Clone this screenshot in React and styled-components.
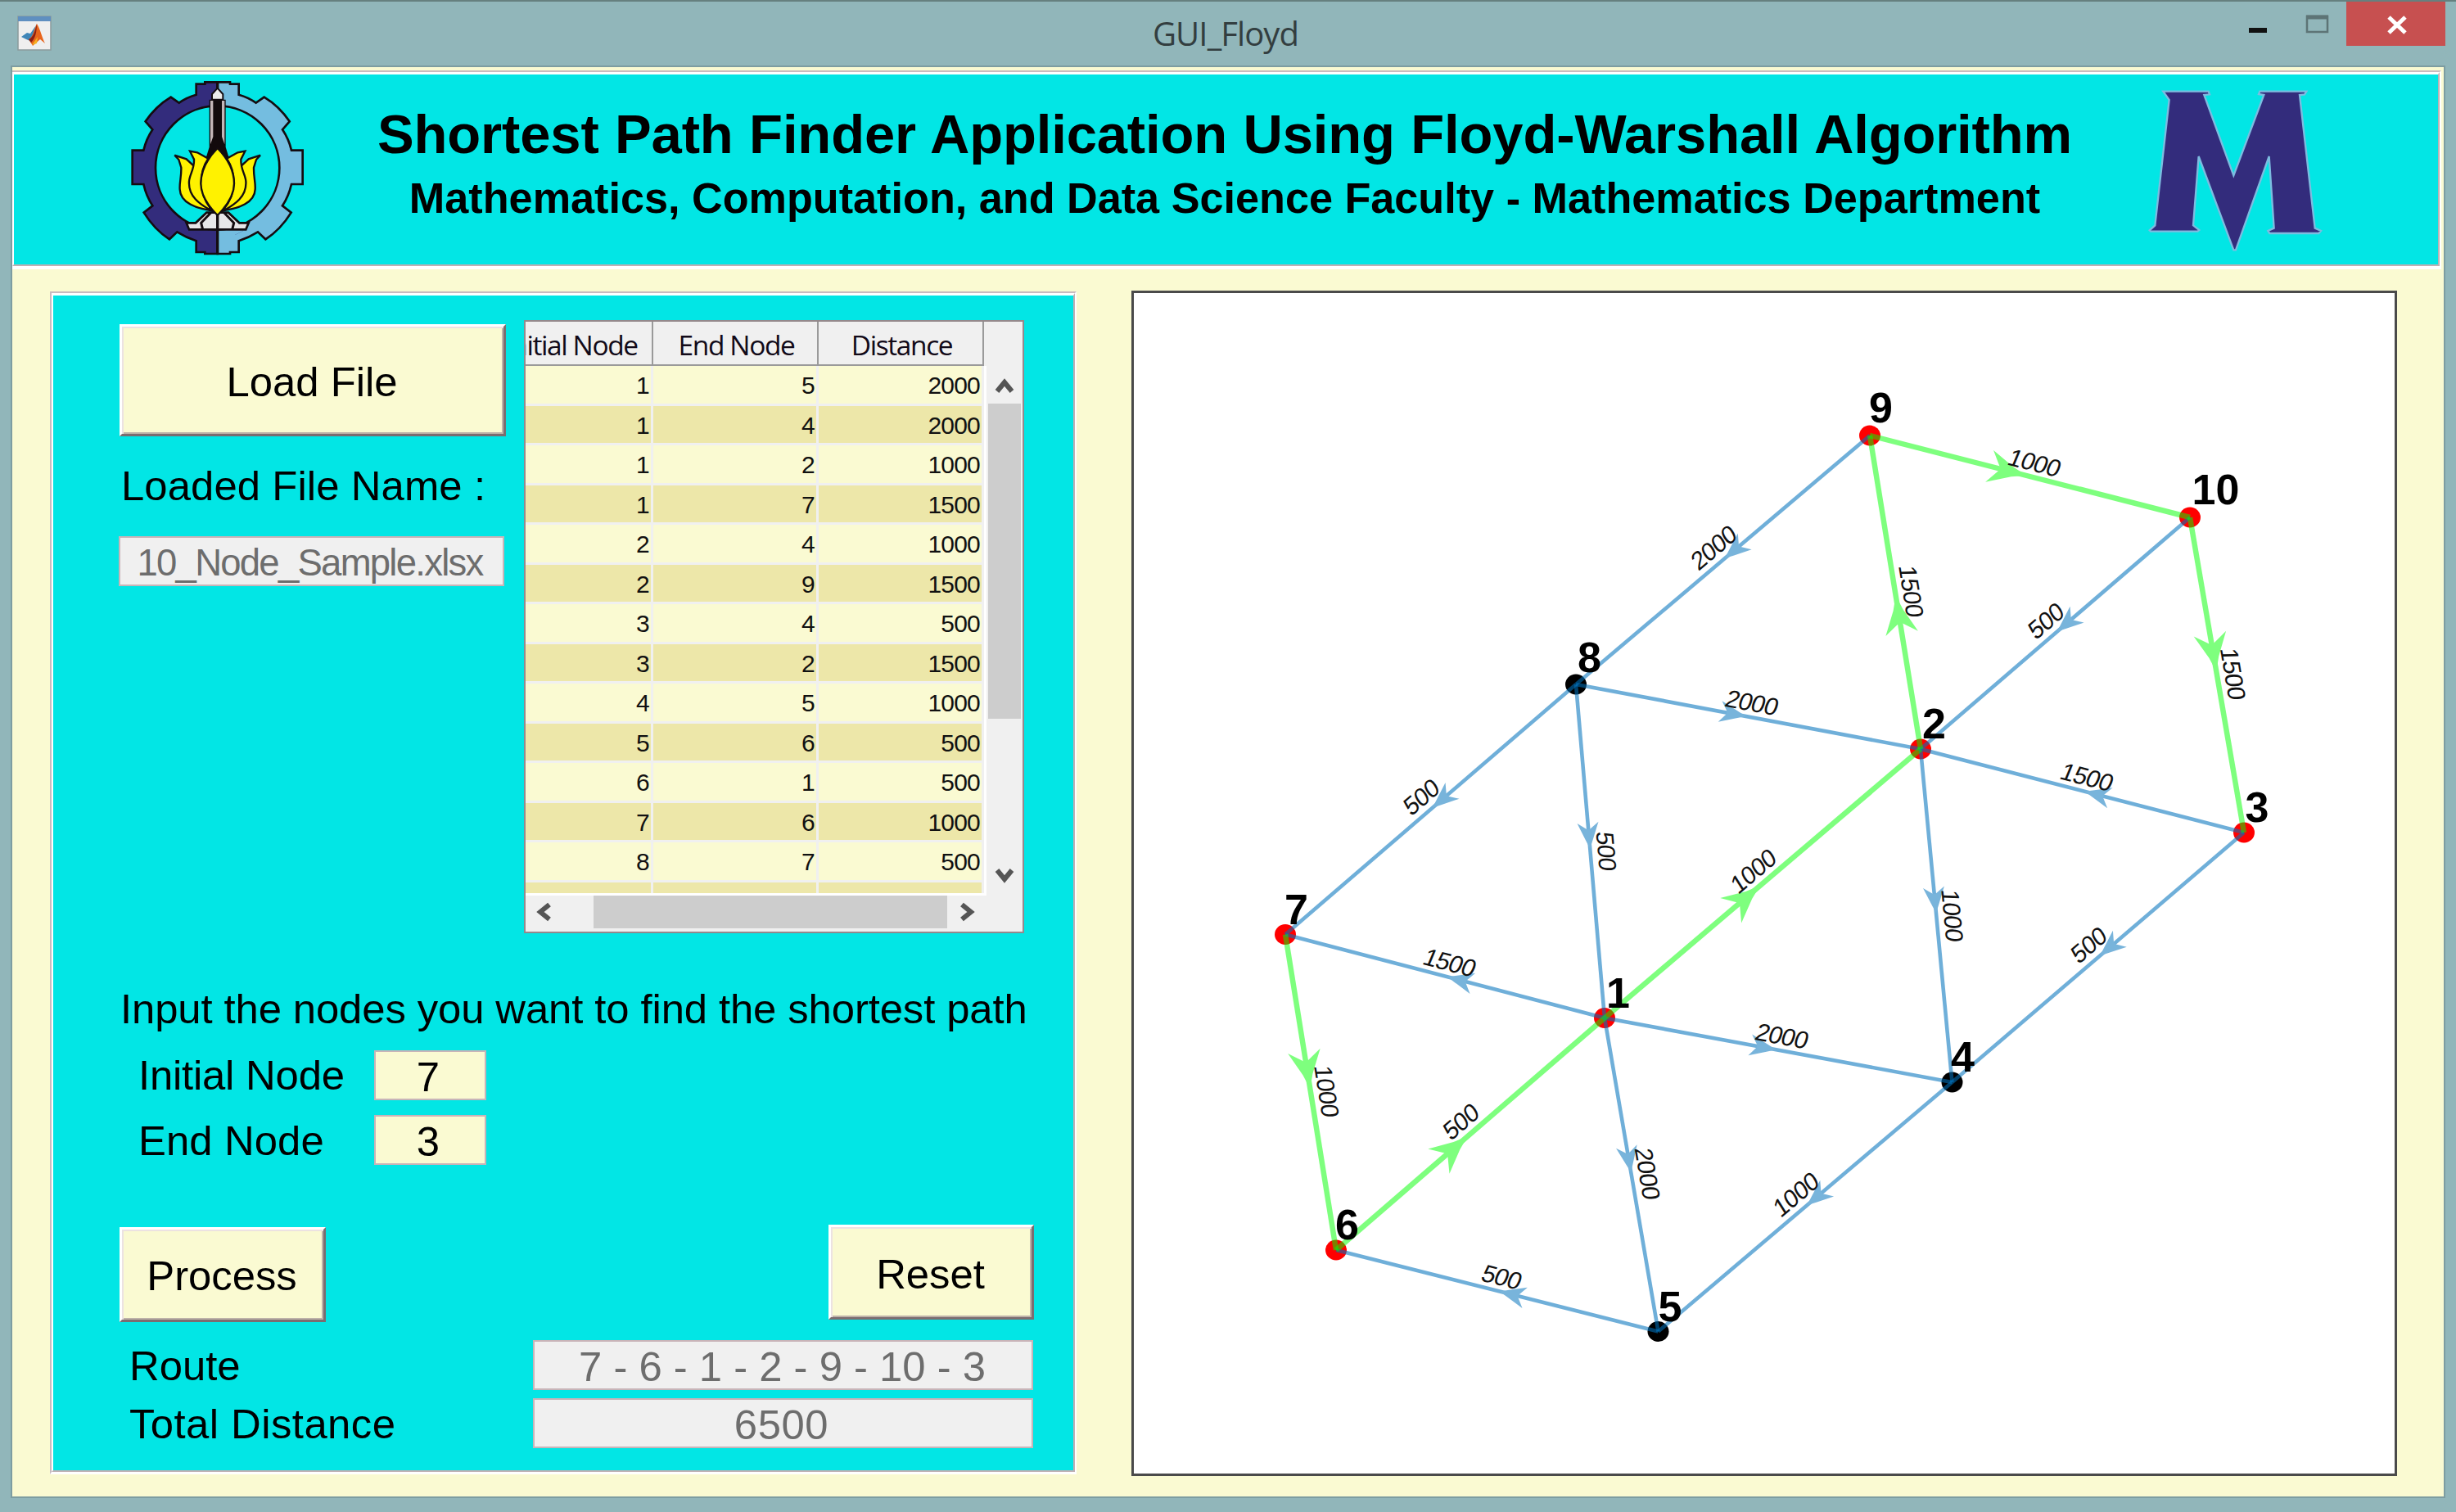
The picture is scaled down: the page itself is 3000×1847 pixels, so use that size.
import React from "react";
import styled, { createGlobalStyle } from "styled-components";

const CYAN = "#02e6e5";
const CREAM = "#fafad2";
const ARIAL = `"Liberation Sans", Arial, sans-serif`;
const SEGOE = `"Open Sans", "Noto Sans", sans-serif`;

const GlobalStyle = createGlobalStyle`
  * { box-sizing: border-box; }
  body { margin: 0; background: #91b6ba; }
`;

const Window = styled.div`
  display: flex;
  flex-direction: column;
  width: 3000px;
  height: 1847px;
  background: #91b6ba;
  border-top: 2px solid #66807f;
  overflow: hidden;
  font-family: ${ARIAL};
  font-size: 50.8px;
  color: #000;
`;

const TitleBar = styled.header`
  display: grid;
  grid-template-columns: 1fr auto 1fr;
  height: 78px;
  padding-right: 13px;
`;

const AppIcon = styled.svg`
  width: 42px;
  height: 43px;
  margin: 17px 0 0 21px;
`;

const Title = styled.h1`
  margin: 10px 0 0 7px;
  font: 400 40px/58px ${SEGOE};
  letter-spacing: ${(p) => p.$track}px;
  color: #333e40;
`;

const Controls = styled.div`
  display: flex;
  justify-content: flex-end;
  align-items: flex-start;
`;

const ControlIcon = styled.svg`
  width: 70px;
  height: 54px;
`;

const Close = styled.div`
  width: 121px;
  height: 54px;
  background: #c75050;
  svg {
    display: block;
    width: 121px;
    height: 54px;
  }
`;

const Client = styled.main`
  width: 2974px;
  height: 1750px;
  margin-left: 13px;
  border: 2px solid #7d9da1;
  background: ${CREAM};
`;

const Etched = styled.div`
  border: solid;
  border-width: 2px;
  border-color: #c9bbbf #fff #fff #c9bbbf;
  > div {
    height: 100%;
    border: solid;
    border-width: 3px 2px 2px 2px;
    border-color: #fff #bfb0b3 #bfb0b3 #fff;
    background: ${CYAN};
  }
`;

const Banner = styled(Etched)`
  width: 2967px;
  height: 243px;
  margin-top: 4px;
  border-left-width: 0;
  border-bottom-width: 4px;
  > div {
    display: flex;
    align-items: flex-start;
  }
`;

const Crest = styled.svg`
  width: 220px;
  height: 224px;
  margin: 2px 0 0 140px;
  flex: none;
`;

const Monogram = styled.svg`
  width: 220px;
  height: 206px;
  margin: 15px 0 0 83px;
  flex: none;
`;

const Headings = styled.div`
  width: 2080px;
  margin-left: 79px;
  padding-top: 33px;
  text-align: center;
  font-weight: 700;
  white-space: nowrap;
`;

const Heading = styled.div`
  font-size: ${(p) => p.$size}px;
  line-height: ${(p) => p.$line}px;
  letter-spacing: ${(p) => p.$track}px;
  word-spacing: ${(p) => p.$word || 0}px;
`;

const Workspace = styled.div`
  display: flex;
  align-items: flex-start;
  gap: 67px;
  padding: 27px 0 0 46px;
`;

const Panel = styled(Etched)`
  width: 1254px;
  height: 1445px;
  border-bottom-width: 3px;
  > div {
    padding: 30px 0 0 81px;
  }
`;

const TopRow = styled.div`
  display: flex;
  align-items: flex-start;
  gap: 22px;
`;

const FileColumn = styled.div`
  width: 472px;
  padding-top: 5px;
`;

const Button = styled.button`
  display: block;
  width: ${(p) => p.$w}px;
  height: ${(p) => p.$h}px;
  margin: ${(p) => p.$top || 0}px 0 0;
  padding: ${(p) => p.$drop || 0}px 2px 0 0;
  border: solid;
  border-width: 3px;
  border-color: #fff #7b6d70 #7b6d70 #fff;
  box-shadow: inset 2px 2px 0 #ece2e2, inset -2px -2px 0 #bdb2a8;
  background: ${CREAM};
  font: 400 50.8px/60px ${ARIAL};
  color: #000;
`;

const Label = styled.div`
  height: 60px;
  line-height: 60px;
  white-space: nowrap;
  width: ${(p) => (p.$w ? `${p.$w}px` : "auto")};
  margin-top: ${(p) => p.$top || 0}px;
  padding-left: ${(p) => p.$left || 0}px;
  letter-spacing: ${(p) => p.$track || 0}px;
`;

const Field = styled.div`
  width: ${(p) => p.$w}px;
  height: 61px;
  margin: ${(p) => p.$margin || "0"};
  padding: ${(p) => p.$pad || "0"};
  border: 2px solid #c8b4b8;
  background: ${(p) => (p.$disabled ? "#f0f0f0" : CREAM)};
  color: ${(p) => (p.$disabled ? "#6d6d6d" : "#000")};
  font-size: ${(p) => p.$size || 50.8}px;
  letter-spacing: ${(p) => p.$track || 0}px;
  line-height: 57px;
  text-align: center;
  white-space: nowrap;
`;

const Row = styled.div`
  display: flex;
  align-items: flex-start;
  margin-top: ${(p) => p.$top}px;
  padding-left: ${(p) => p.$left || 0}px;
`;

const Actions = styled(Row)`
  justify-content: space-between;
  width: 1117px;
`;

const Table = styled.div`
  width: 611px;
  height: 749px;
  border: 2px solid #94898c;
  background: #f0f0f0;
  font-size: 30px;
`;

const TableUpper = styled.div`
  display: flex;
  height: 701px;
`;

const Columns = styled.div`
  display: grid;
  grid-template-columns: 156px 202px 202px;
`;

const Sheet = styled.div`
  width: 563px;
`;

const HeadCell = styled.div`
  display: flex;
  justify-content: center;
  height: 54px;
  margin-left: ${(p) => -(p.$clip || 0)}px;
  border-right: 2px solid #9a9a9a;
  border-bottom: 2px solid #9a9a9a;
  padding-left: 3px;
  font: 400 33.5px/57px ${SEGOE};
  letter-spacing: -1.4px;
  white-space: nowrap;
  color: #120a18;
`;

const HeadRow = styled(Columns)`
  width: 560px;
  overflow: hidden;
`;

const Body = styled.div`
  width: 563px;
  height: 647px;
  overflow: hidden;
  border-right: 3px solid #fff;
  border-bottom: 3px solid #fff;
`;

const Cell = styled.div`
  height: 48.5px;
  padding-right: 2px;
  border-right: 3px solid #f0f0f0;
  border-bottom: 3px solid #f0f0f0;
  background: ${(p) => (p.$dark ? "#ede7a9" : CREAM)};
  line-height: 48.5px;
  letter-spacing: -0.8px;
  text-align: right;
  color: #111;
`;

const VScroll = styled.div`
  display: flex;
  flex-direction: column;
  align-items: center;
  width: 44px;
  padding: 54px 1px 0 0;
`;

const HScroll = styled.div`
  display: flex;
  height: 40px;
`;

const Thumb = styled.div`
  width: ${(p) => p.$w}px;
  height: ${(p) => p.$h}px;
  margin-top: ${(p) => p.$top || 0}px;
  margin-left: ${(p) => p.$left || 0}px;
  background: #cdcdcd;
`;

const Arrow = styled.svg`
  display: block;
  width: ${(p) => p.$w}px;
  height: ${(p) => p.$h}px;
  margin-top: ${(p) => p.$top || 0}px;
  margin-left: ${(p) => p.$left || 0}px;
  fill: none;
  stroke: #555;
  stroke-width: 6;
`;

const Plot = styled.svg`
  display: block;
  width: 1546px;
  height: 1448px;
  margin-top: -1px;
  border: 3px solid #4a4a4a;
  background: #fff;
`;

const NodeName = styled.text`
  font: 700 52px ${ARIAL};
`;

const EdgeWeight = styled.text`
  font: 400 30px ${ARIAL};
  letter-spacing: -0.8px;
  text-anchor: middle;
  fill: #111;
`;

const rows = [
  [1, 5, 2000],
  [1, 4, 2000],
  [1, 2, 1000],
  [1, 7, 1500],
  [2, 4, 1000],
  [2, 9, 1500],
  [3, 4, 500],
  [3, 2, 1500],
  [4, 5, 1000],
  [5, 6, 500],
  [6, 1, 500],
  [7, 6, 1000],
  [8, 7, 500],
  ["", "", ""],
];

const nodes = {
  1: [1960, 1243.5, true],
  2: [2346, 915, true],
  3: [2741, 1017, true],
  4: [2384.5, 1322, false],
  5: [2025.5, 1626.5, false],
  6: [1632, 1527, true],
  7: [1570, 1141.5, true],
  8: [1925, 836, false],
  9: [2284, 532, true],
  10: [2675, 632, true],
};

// Offsets of each node's name from the node centre
const nameOffsets = {
  1: [2, -12.5],
  2: [2, -13],
  3: [1.5, -13],
  4: [-1.5, -13.5],
  5: [0, -13],
  6: [-1, -13.5],
  7: [-1, -13],
  8: [2, -15],
  9: [-1, -16],
  10: [2.5, -16],
};

const edges = [
  [1, 5, 2000],
  [1, 4, 2000],
  [1, 7, 1500],
  [2, 4, 1000],
  [3, 4, 500],
  [3, 2, 1500],
  [4, 5, 1000],
  [5, 6, 500],
  [8, 7, 500],
  [8, 1, 500],
  [8, 2, 2000],
  [9, 8, 2000],
  [10, 2, 500],
  [1, 2, 1000, true],
  [2, 9, 1500, true],
  [6, 1, 500, true],
  [7, 6, 1000, true],
  [9, 10, 1000, true],
  [10, 3, 1500, true],
];

function Edge({ from, to, onRoute }) {
  const [x1, y1] = nodes[from];
  const [x2, y2] = nodes[to];
  const deg = (Math.atan2(y2 - y1, x2 - x1) * 180) / Math.PI;
  const head = onRoute
    ? "M-4 0 L-22 -6 L-51 -20 L-39 -3 L-39 3 L-51 20 L-22 6 Z"
    : "M-3 0 L-14 -4.5 L-35 -13 L-27 -2 L-27 2 L-35 13 L-14 4.5 Z";
  return (
    <g opacity={onRoute ? 0.5 : 0.56}>
      <line x1={x1} y1={y1} x2={x2} y2={y2} stroke={onRoute ? "#00ff00" : "#0072bd"} strokeWidth={onRoute ? 6.5 : 4.6} />
      <path
        d={head}
        fill={onRoute ? "#00ff00" : "#107abf"}
        transform={`translate(${(x1 + x2) / 2} ${(y1 + y2) / 2}) rotate(${deg})`}
      />
    </g>
  );
}

function Weight({ from, to, value }) {
  const [x1, y1] = nodes[from];
  const [x2, y2] = nodes[to];
  let deg = (Math.atan2(y2 - y1, x2 - x1) * 180) / Math.PI;
  if (deg > 90) deg -= 180;
  if (deg < -88) deg += 180;
  const steep = Math.abs(deg) > 60;
  return (
    <EdgeWeight
      y={-8}
      transform={`translate(${(x1 + x2) / 2 + (steep ? 1 : -1.5)} ${(y1 + y2) / 2 + (steep ? -1 : 0.5)}) rotate(${deg}) skewX(-8)`}
    >
      {value}
    </EdgeWeight>
  );
}

function Graph() {
  return (
    <Plot viewBox="1385 358 1540 1442">
      {Object.entries(nodes).map(([id, [x, y, hit]]) => (
        <ellipse key={id} cx={x} cy={y} rx={13} ry={12.5} fill={hit ? "#ff0000" : "#000"} />
      ))}
      {edges.map(([a, b, , r]) => (
        <Edge key={`${a}-${b}`} from={a} to={b} onRoute={r} />
      ))}
      {edges.map(([a, b, w]) => (
        <Weight key={`${a}-${b}`} from={a} to={b} value={w} />
      ))}
      {Object.entries(nodes).map(([id, [x, y]]) => (
        <NodeName key={id} x={x + nameOffsets[id][0]} y={y + nameOffsets[id][1]}>
          {id}
        </NodeName>
      ))}
    </Plot>
  );
}

const gearHalf =
  "M376 62 H330 V69 H298 V108 Q262 118 235 138 L205 117 Q150 150 112 206 L138 236 Q115 270 105 312 H64 V436 H105 Q115 480 138 515 L106 540 Q146 604 200 638 L228 611 Q262 632 298 644 V685 H330 V691 H376 Z";

function CrestLogo() {
  const petals = (
    <>
      <path d="M352 532 C300 525 240 505 238 455 C236 430 244 410 243 375 L234 346 L219 330 L262 344 L288 368 C300 420 280 470 352 532 Z" />
      <path d="M360 536 C310 510 268 480 272 425 C274 400 292 380 290 345 L275 315 L302 320 L342 342 C310 390 300 470 360 536 Z" />
    </>
  );
  return (
    <Crest viewBox="50 40 660 672">
      <g stroke="#140c10" strokeWidth="8" strokeLinejoin="miter">
        <path d={gearHalf} fill="#332c7c" />
        <path d={gearHalf} fill="#74bde0" transform="translate(752 0) scale(-1 1)" />
        <circle cx="376" cy="376" r="227" fill={CYAN} />
      </g>
      <path d="M346 126 H406 V300 L420 345 H332 L346 300 Z" fill="#120a0c" />
      <path d="M350 130 H360 V262 L350 290 Z M392 130 H402 V290 L392 262 Z" fill="#c4b6b8" />
      <path d="M356 126 V106 L376 84 L396 106 V126 Z" fill="#ececec" stroke="#140c10" strokeWidth="6" />
      <path d="M376 62 V86" stroke="#140c10" strokeWidth="10" />
      <g fill="#fff200" stroke="#140c10" strokeWidth="7" strokeLinejoin="miter">
        {petals}
        <g transform="translate(752 0) scale(-1 1)">{petals}</g>
      </g>
      <path d="M272 602 L262 578 H296 L336 540 H416 L456 578 H490 L480 602 Z" fill="#e8e6e8" stroke="#140c10" strokeWidth="8" />
      <path d="M352 540 L316 578 L322 602 M400 540 L436 578 L430 602" fill="none" stroke="#140c10" strokeWidth="9" />
      <path d="M282 607 H470 L440 622 H312 Z" fill="#332c7c" />
      <path d="M376 607 H470 L440 622 H376 Z" fill="#74bde0" />
      <path d="M376 304 C336 345 315 385 315 434 C315 480 346 520 376 550 C406 520 437 480 437 434 C437 385 416 345 376 304 Z" fill="#fff200" stroke="#140c10" strokeWidth="7" />
      <path d="M376 546 V690" stroke="#140c10" strokeWidth="10" />
    </Crest>
  );
}

function MonogramLogo() {
  return (
    <Monogram viewBox="180 320 660 618">
      <path
        d="M250 337 H416 L420 348 L400 350 L508 645 L619 350 L600 347 L604 337 H775 L768 348 L750 350 L806 838 L828 848 L820 857 H640 L634 848 L656 838 L638 575 L516 918 L508 918 L380 575 L360 828 L382 845 L376 850 H204 L200 846 L220 828 L272 368 Z"
        fill="#332c7c"
        stroke="#7dbce0"
        strokeWidth="7"
      />
    </Monogram>
  );
}

export default function App() {
  return (
    <>
      <GlobalStyle />
      <Window>
        <TitleBar>
          <AppIcon viewBox="0 0 42 43">
            <rect x="1" y="1" width="40" height="41" fill="#efefef" stroke="#8b9a9c" strokeWidth="1.5" />
            <rect x="1" y="1" width="40" height="6" fill="#5f8fc0" />
            <path d="M5 26 L12 21 L16 22 L23 12 L18 32 L11 29 Z" fill="#3f86b8" />
            <path d="M24 10 C28 16 30 26 34 34 L28 29 L19 37 L14 29 C19 27 21 16 24 10 Z" fill="#e8641b" />
            <path d="M24 10 C22 18 20 27 14 29 L17 33 C22 28 24 20 24 10 Z" fill="#8c1f12" />
            <path d="M18 36 L25 26 L24 34 Z" fill="#f6b021" />
          </AppIcon>
          <Title $track={-0.9}>GUI_Floyd</Title>
          <Controls>
            <ControlIcon viewBox="0 0 70 54">
              <rect x="21" y="32" width="22" height="6" fill="#111" />
            </ControlIcon>
            <ControlIcon viewBox="0 0 70 54">
              <path d="M22 18 H47 V37 H22 Z" fill="none" stroke="#5d7476" strokeWidth="2.5" />
              <path d="M21 19 H48" stroke="#5d7476" strokeWidth="5" />
            </ControlIcon>
            <Close>
              <svg viewBox="0 0 121 54">
                <path d="M52 19 L72 38 M72 19 L52 38" stroke="#fff" strokeWidth="5" />
              </svg>
            </Close>
          </Controls>
        </TitleBar>
        <Client>
          <Banner>
            <div>
              <CrestLogo />
              <Headings>
                <Heading $size={67} $line={79} $track={-0.15} $word={1}>
                  Shortest Path Finder Application Using Floyd-Warshall Algorithm
                </Heading>
                <Heading $size={52.2} $line={79} $track={0}>
                  Mathematics, Computation, and Data Science Faculty - Mathematics Department
                </Heading>
              </Headings>
              <MonogramLogo />
            </div>
          </Banner>
          <Workspace>
            <Panel>
              <div>
                <TopRow>
                  <FileColumn>
                    <Button $w={472} $h={137} $drop={5}>
                      Load File
                    </Button>
                    <Label $top={31} $left={2} $track={0.1}>
                      Loaded File Name :
                    </Label>
                    <Field $disabled $w={471} $margin="31px 0 0 -1px" $pad="2px 4px 0 0" $size={45.5} $track={-1.75}>
                      10_Node_Sample.xlsx
                    </Field>
                  </FileColumn>
                  <Table>
                    <TableUpper>
                      <Sheet>
                        <HeadRow>
                          <HeadCell $clip={46}>Initial Node</HeadCell>
                          <HeadCell>End Node</HeadCell>
                          <HeadCell>Distance</HeadCell>
                        </HeadRow>
                        <Body>
                          {rows.map((r, i) => (
                            <Columns key={i}>
                              {r.map((v, j) => (
                                <Cell key={j} $dark={i % 2 === 1}>
                                  {v}
                                </Cell>
                              ))}
                            </Columns>
                          ))}
                        </Body>
                      </Sheet>
                      <VScroll>
                        <Arrow $w={26} $h={20} $top={14} viewBox="0 0 26 20">
                          <path d="M4 17 L13 6 L22 17" />
                        </Arrow>
                        <Thumb $w={40} $h={385} $top={12} />
                        <Arrow $w={26} $h={20} $top={182} viewBox="0 0 26 20">
                          <path d="M4 3 L13 14 L22 3" />
                        </Arrow>
                      </VScroll>
                    </TableUpper>
                    <HScroll>
                      <Arrow $w={20} $h={24} $top={8} $left={12} viewBox="0 0 20 24">
                        <path d="M17 3 L6 12 L17 21" />
                      </Arrow>
                      <Thumb $w={432} $h={40} $left={51} />
                      <Arrow $w={20} $h={24} $top={8} $left={15} viewBox="0 0 20 24">
                        <path d="M3 3 L14 12 L3 21" />
                      </Arrow>
                    </HScroll>
                  </Table>
                </TopRow>
                <Label $top={63} $left={1} $track={-0.1}>
                  Input the nodes you want to find the shortest path
                </Label>
                <Row $top={20} $left={23}>
                  <Label $w={288} $top={1} $track={-0.2}>
                    Initial Node
                  </Label>
                  <Field $w={137} $pad="2px 5px 0 0">
                    7
                  </Field>
                </Row>
                <Row $top={18} $left={23}>
                  <Label $w={288} $top={2} $track={0.1}>
                    End Node
                  </Label>
                  <Field $w={137} $pad="2px 5px 0 0">
                    3
                  </Field>
                </Row>
                <Actions $top={72}>
                  <Button $w={252} $h={116} $top={3} $drop={4}>
                    Process
                  </Button>
                  <Button $w={251} $h={116} $drop={5}>
                    Reset
                  </Button>
                </Actions>
                <Row $top={22} $left={12}>
                  <Label $w={493} $top={2}>
                    Route
                  </Label>
                  <Field $disabled $w={611} $pad="2px 2px 0 0">
                    7 - 6 - 1 - 2 - 9 - 10 - 3
                  </Field>
                </Row>
                <Row $top={9} $left={12}>
                  <Label $w={493} $top={2} $track={0.45}>
                    Total Distance
                  </Label>
                  <Field $disabled $w={611} $pad="2px 4px 0 0" $track={0.6}>
                    6500
                  </Field>
                </Row>
              </div>
            </Panel>
            <Graph />
          </Workspace>
        </Client>
      </Window>
    </>
  );
}
